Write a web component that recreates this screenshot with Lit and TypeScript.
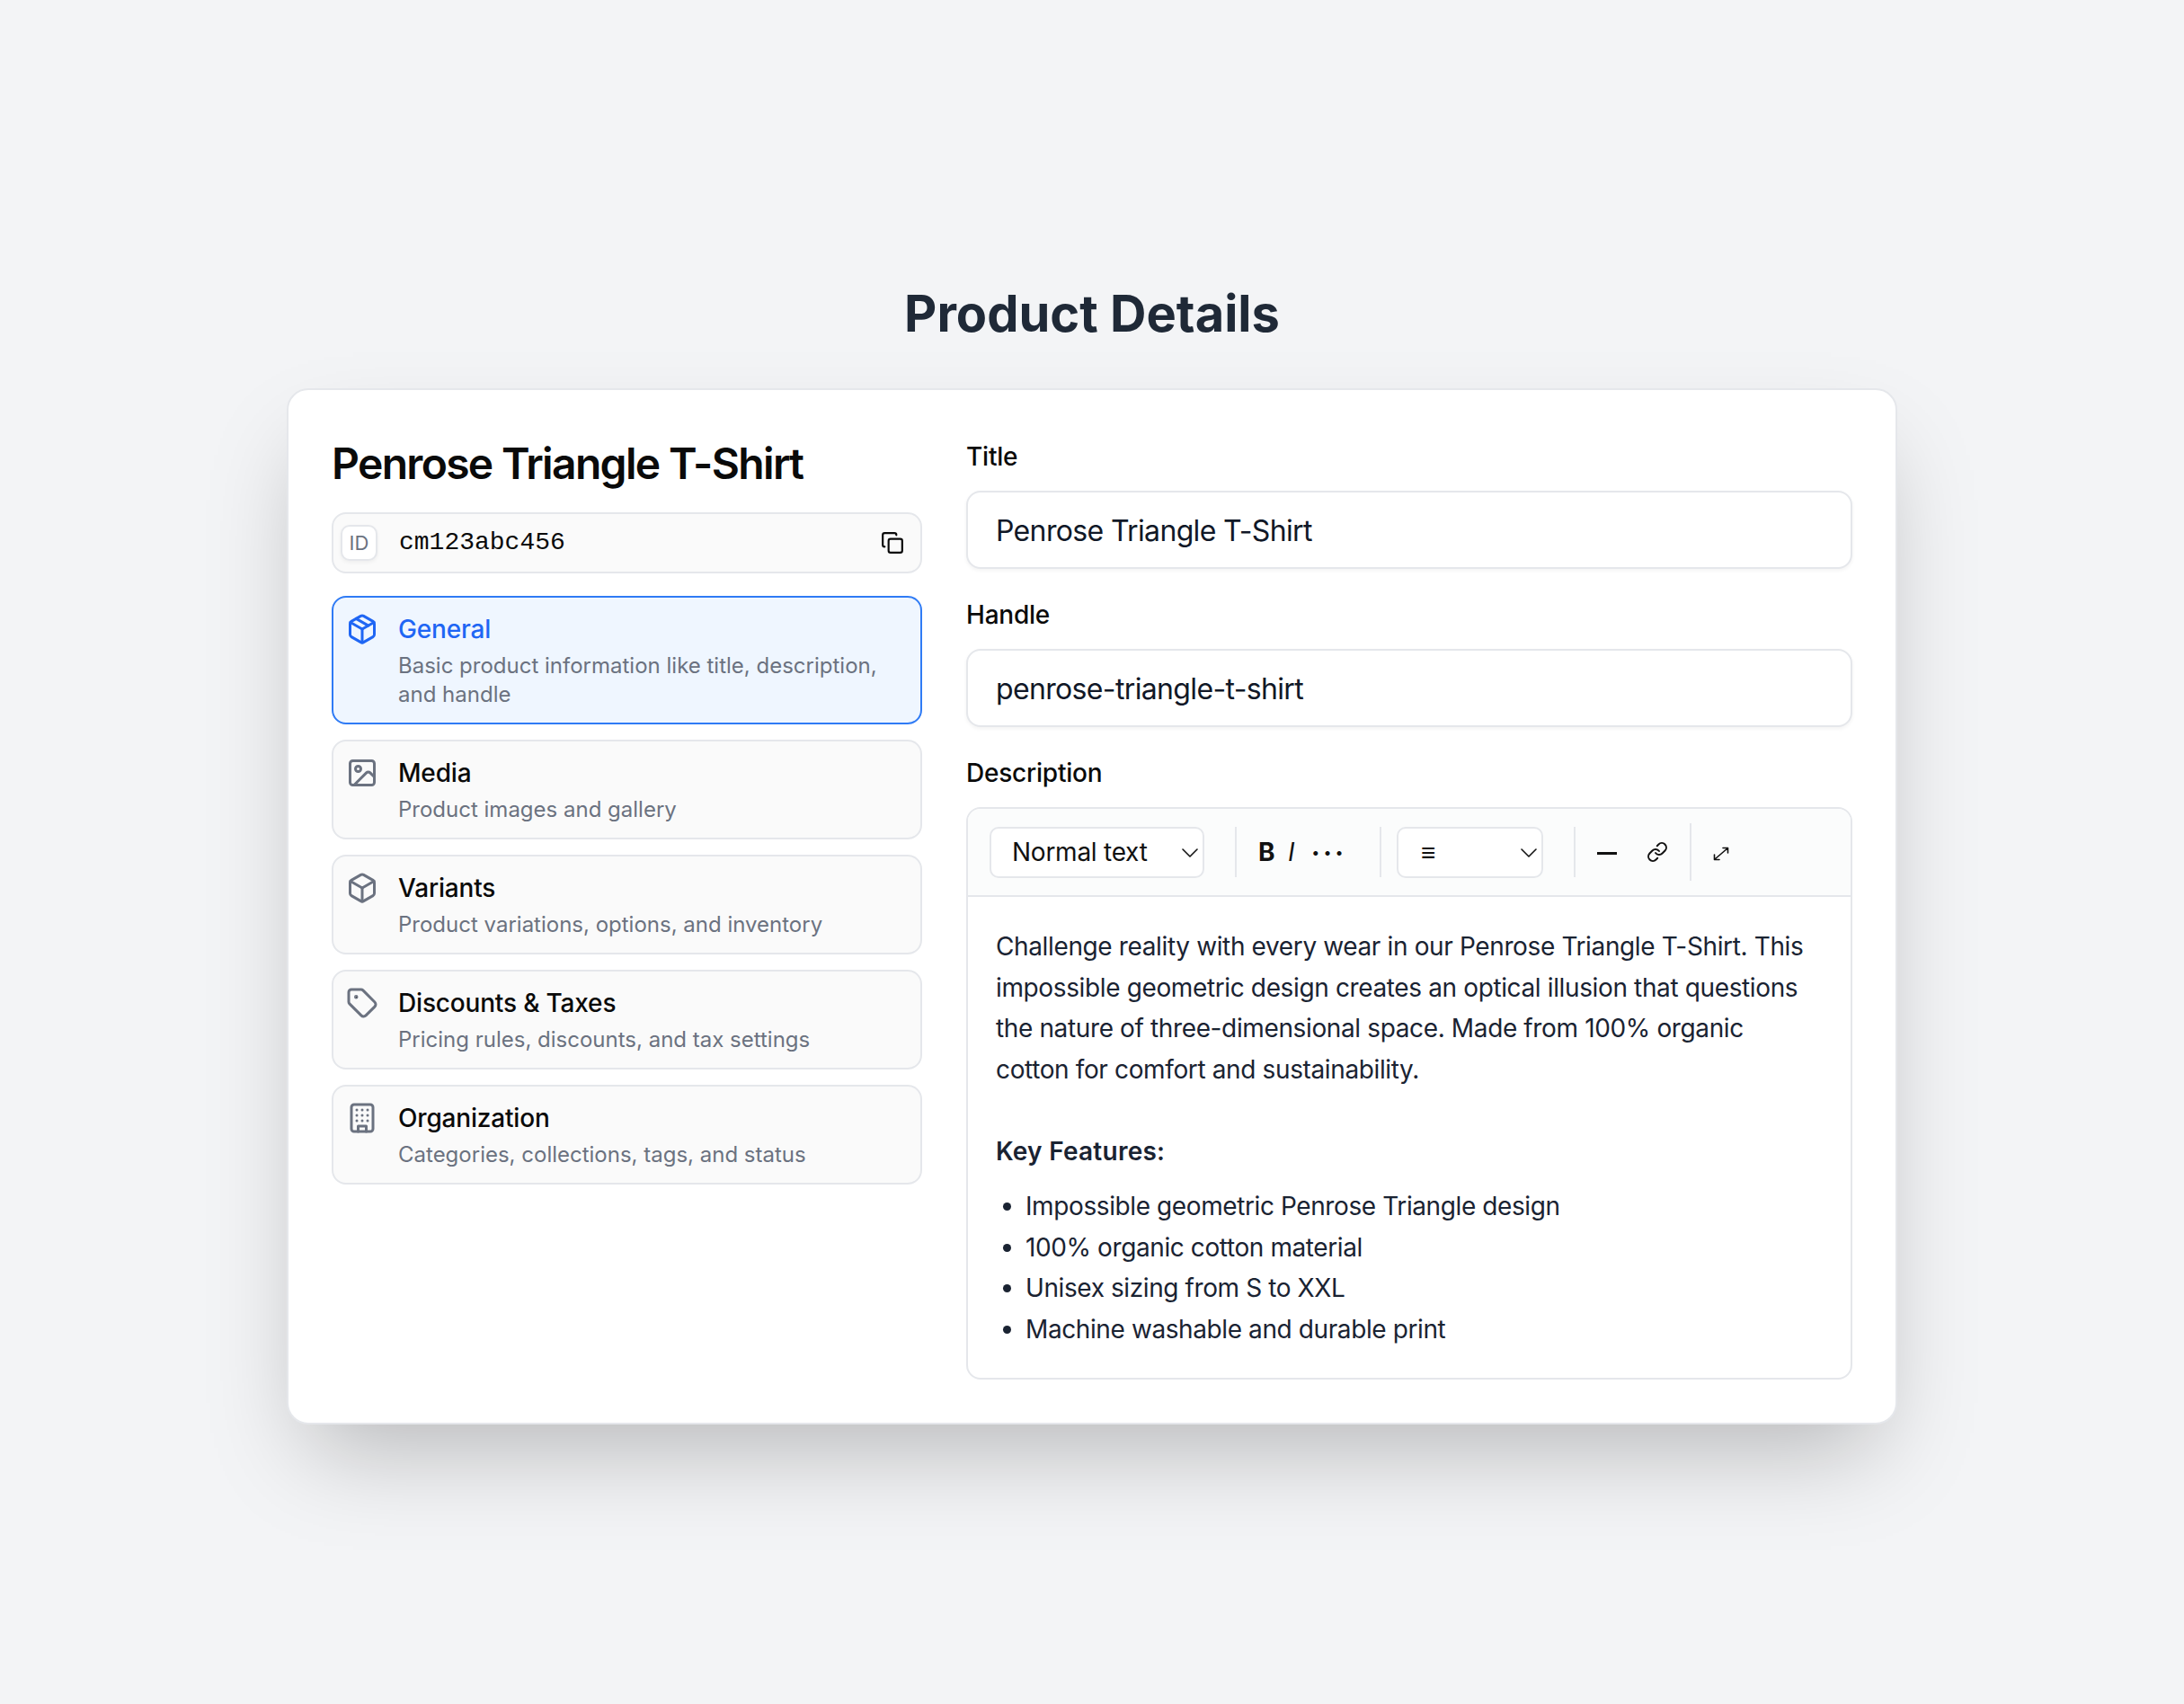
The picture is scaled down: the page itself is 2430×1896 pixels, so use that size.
import { LitElement, css, html, svg } from 'lit';
import { customElement } from 'lit/decorators.js';
import { classMap } from 'lit/directives/class-map.js';

const icons = {
  package: svg`<path d="M11 21.73a2 2 0 0 0 2 0l7-4A2 2 0 0 0 21 16V8a2 2 0 0 0-1-1.73l-7-4a2 2 0 0 0-2 0l-7 4A2 2 0 0 0 3 8v8a2 2 0 0 0 1 1.73z"/><path d="M12 22V12"/><polyline points="3.29 7 12 12 20.71 7"/><path d="m7.5 4.27 9 5.15"/>`,
  image: svg`<rect x="3" y="3" width="18" height="18" rx="2"/><circle cx="9" cy="9" r="2"/><path d="m21 15-3.086-3.086a2 2 0 0 0-2.828 0L6 21"/>`,
  box: svg`<path d="M21 8a2 2 0 0 0-1-1.73l-7-4a2 2 0 0 0-2 0l-7 4A2 2 0 0 0 3 8v8a2 2 0 0 0 1 1.73l7 4a2 2 0 0 0 2 0l7-4A2 2 0 0 0 21 16Z"/><path d="m3.3 7 8.7 5 8.7-5"/><path d="M12 22V12"/>`,
  tag: svg`<path d="M12.586 2.586A2 2 0 0 0 11.172 2H4a2 2 0 0 0-2 2v7.172a2 2 0 0 0 .586 1.414l8.704 8.704a2.426 2.426 0 0 0 3.42 0l6.58-6.58a2.426 2.426 0 0 0 0-3.42z"/><circle cx="7.5" cy="7.5" r=".5" fill="currentColor"/>`,
  building: svg`<rect x="4" y="2" width="16" height="20" rx="2"/><path d="M9 22v-4h6v4"/><path d="M8 6h.01M16 6h.01M12 6h.01M12 10h.01M12 14h.01M16 10h.01M16 14h.01M8 10h.01M8 14h.01"/>`,
};

const chevron = html`<svg class="chevron" viewBox="0 0 18 10"><path d="M1 1l8 8 8-8" /></svg>`;

const sections = [
  { icon: icons.package, name: 'General', desc: 'Basic product information like title, description, and handle', active: true },
  { icon: icons.image, name: 'Media', desc: 'Product images and gallery' },
  { icon: icons.box, name: 'Variants', desc: 'Product variations, options, and inventory' },
  { icon: icons.tag, name: 'Discounts & Taxes', desc: 'Pricing rules, discounts, and tax settings' },
  { icon: icons.building, name: 'Organization', desc: 'Categories, collections, tags, and status' },
];

const features = [
  'Impossible geometric Penrose Triangle design',
  '100% organic cotton material',
  'Unisex sizing from S to XXL',
  'Machine washable and durable print',
];

@customElement('app-root')
export class AppRoot extends LitElement {
  static styles = css`
    :host {
      display: block;
      min-height: 1896px;
      background: #f3f4f6;
      font-family: Inter, 'Liberation Sans', sans-serif;
      color: #0a0a0a;
    }
    * {
      box-sizing: border-box;
    }
    .page {
      min-height: 1896px;
      padding-top: 317px;
      display: flex;
      flex-direction: column;
      align-items: center;
    }
    .page-title {
      margin: 0 0 51px;
      font-size: 56px;
      line-height: 64px;
      font-weight: 700;
      color: #1f2937;
    }
    .card {
      width: 1792px;
      display: grid;
      grid-template-columns: 657px 986px;
      gap: 49px;
      padding: 48px;
      background: #fff;
      border: 2px solid #e5e7eb;
      border-radius: 24px;
      box-shadow: 0 50px 100px -24px rgba(0, 0, 0, 0.25);
    }
    h1 {
      margin: 0 0 22px;
      padding-top: 2px;
      font-size: 48px;
      line-height: 64px;
      font-weight: 600;
      letter-spacing: -1.68px;
    }
    .id-row {
      height: 68px;
      display: flex;
      align-items: center;
      padding: 0 18px 0 8px;
      background: #fafafa;
      border: 2px solid #e5e7eb;
      border-radius: 16px;
      margin-bottom: 25px;
    }
    .id-badge {
      width: 41px;
      height: 40px;
      display: flex;
      align-items: center;
      justify-content: center;
      background: #fff;
      border: 2px solid #e5e7eb;
      border-radius: 10px;
      box-shadow: 0 2px 4px rgba(0, 0, 0, 0.05);
      font-size: 22px;
      color: #6b7280;
    }
    .id-value {
      flex: 1;
      margin-left: 24px;
      font-family: 'Liberation Mono', monospace;
      font-size: 28px;
      line-height: 40px;
    }
    .copy {
      width: 26px;
      height: 26px;
      fill: none;
      stroke: #0a0a0a;
      stroke-width: 2;
      stroke-linecap: round;
      stroke-linejoin: round;
    }
    .sections {
      display: flex;
      flex-direction: column;
      gap: 17px;
    }
    .section {
      display: flex;
      gap: 22px;
      padding: 15px 14px;
      background: #fafafa;
      border: 2px solid #e5e7eb;
      border-radius: 16px;
    }
    .section svg {
      flex: none;
      width: 36px;
      height: 36px;
      margin-top: 2px;
      fill: none;
      stroke: #6b7280;
      stroke-width: 2;
      stroke-linecap: round;
      stroke-linejoin: round;
    }
    .section.active {
      background: #eff6ff;
      border-color: #2f7bf5;
    }
    .section.active svg {
      stroke: #1f66f4;
    }
    .name {
      font-size: 28px;
      line-height: 40px;
      font-weight: 500;
      letter-spacing: -0.18px;
    }
    .section.active .name {
      color: #1f66f4;
    }
    .desc {
      margin-top: 5px;
      font-size: 24px;
      line-height: 32px;
      color: #6b7280;
    }
    .fields {
      padding-top: 6px;
    }
    label {
      display: block;
      margin-bottom: 18px;
      font-size: 28px;
      line-height: 40px;
      font-weight: 500;
      letter-spacing: -0.22px;
    }
    .input {
      height: 87px;
      display: flex;
      align-items: center;
      padding: 1px 31px 0;
      margin-bottom: 31px;
      background: #fff;
      border: 2px solid #e5e7eb;
      border-radius: 16px;
      box-shadow: 0 2px 4px rgba(0, 0, 0, 0.05);
      font-size: 32px;
      letter-spacing: -0.65px;
      color: #111827;
    }
    .editor {
      border: 2px solid #e5e7eb;
      border-radius: 16px;
      overflow: hidden;
    }
    .toolbar {
      height: 98px;
      display: flex;
      align-items: center;
      padding: 0 24px;
      background: #fbfcfc;
      border-bottom: 2px solid #e5e7eb;
    }
    .select {
      position: relative;
      flex: none;
      height: 57px;
    }
    select {
      appearance: none;
      width: 100%;
      height: 100%;
      background: #fff;
      border: 2px solid #e5e7eb;
      border-radius: 10px;
      font: 28px Inter, sans-serif;
      letter-spacing: -0.25px;
      color: #111;
    }
    .chevron {
      position: absolute;
      top: 24px;
      right: 7px;
      width: 18px;
      height: 10px;
      fill: none;
      stroke: #111;
      stroke-width: 1.6;
      stroke-linecap: round;
      stroke-linejoin: round;
    }
    .style-select {
      width: 239px;
    }
    .style-select select {
      padding: 0 0 0 23px;
    }
    .list-select {
      width: 163px;
      margin-left: 17px;
    }
    .list-select select {
      padding: 0 0 0 25px;
    }
    .divider {
      flex: none;
      width: 2px;
      height: 56px;
      background: #e5e7eb;
    }
    .divider.tall {
      height: 64px;
    }
    .after-select {
      margin-left: 34px;
    }
    .tool {
      flex: none;
      font-size: 28px;
      line-height: 40px;
      color: #111;
    }
    .bold {
      width: 18px;
      margin-left: 24px;
      font-weight: 700;
    }
    .italic {
      width: 10px;
      margin-left: 15px;
      font-style: italic;
    }
    .more {
      width: 32px;
      margin-left: 17px;
      margin-right: 43px;
      font-size: 16px;
      letter-spacing: 5.6px;
      font-weight: 700;
      white-space: nowrap;
    }
    .line-tool {
      flex: none;
      margin: 2px 0 0 24px;
      width: 22px;
      height: 3px;
      background: #111;
    }
    .tool-icon {
      flex: none;
      fill: none;
      stroke: #111;
      stroke-linecap: round;
      stroke-linejoin: round;
    }
    .link-icon {
      width: 24px;
      height: 24px;
      margin-left: 33px;
      margin-right: 24px;
      stroke-width: 2;
    }
    .expand-icon {
      width: 20px;
      height: 20px;
      margin-left: 23px;
      stroke-width: 1.6;
    }
    .body {
      padding: 33px 40px 31px 31px;
      font-size: 28px;
      line-height: 45.5px;
      letter-spacing: -0.37px;
      color: #1a2332;
    }
    .body p {
      margin: 0;
    }
    .body strong {
      display: block;
      margin-top: 45.5px;
      font-weight: 600;
      letter-spacing: 0.25px;
    }
    .body ul {
      margin: 16px 0 0;
      padding: 0 0 0 33px;
      letter-spacing: -0.4px;
    }
  `;

  render() {
    return html`
      <div class="page">
        <h2 class="page-title">Product Details</h2>
        <div class="card">
          <div>
            <h1>Penrose Triangle T-Shirt</h1>
            <div class="id-row">
              <span class="id-badge">ID</span>
              <span class="id-value">cm123abc456</span>
              <svg class="copy" viewBox="0 0 24 24">
                <rect x="8" y="8" width="14" height="14" rx="2" />
                <path d="M4 16c-1.1 0-2-.9-2-2V4c0-1.1.9-2 2-2h10c1.1 0 2 .9 2 2" />
              </svg>
            </div>
            <div class="sections">
              ${sections.map(
                (s) => html`
                  <div class=${classMap({ section: true, active: !!s.active })}>
                    <svg viewBox="0 0 24 24">${s.icon}</svg>
                    <div>
                      <div class="name">${s.name}</div>
                      <div class="desc">${s.desc}</div>
                    </div>
                  </div>
                `,
              )}
            </div>
          </div>
          <div class="fields">
            <label>Title</label>
            <div class="input">Penrose Triangle T-Shirt</div>
            <label>Handle</label>
            <div class="input">penrose-triangle-t-shirt</div>
            <label>Description</label>
            <div class="editor">
              <div class="toolbar">
                <div class="select style-select">
                  <select><option>Normal text</option></select>
                  ${chevron}
                </div>
                <span class="divider after-select"></span>
                <span class="tool bold">B</span>
                <span class="tool italic">I</span>
                <span class="tool more">•••</span>
                <span class="divider"></span>
                <div class="select list-select">
                  <select><option>≡</option></select>
                  ${chevron}
                </div>
                <span class="divider after-select"></span>
                <span class="line-tool"></span>
                <svg class="tool-icon link-icon" viewBox="0 0 24 24">
                  <path d="M10 13a5 5 0 0 0 7.54.54l3-3a5 5 0 0 0-7.07-7.07l-1.72 1.71" />
                  <path d="M14 11a5 5 0 0 0-7.54-.54l-3 3a5 5 0 0 0 7.07 7.07l1.71-1.71" />
                </svg>
                <span class="divider tall"></span>
                <svg class="tool-icon expand-icon" viewBox="0 0 20 20">
                  <path d="M3 18 17 6M12 5.5h5.5V11M2.5 13v5.5H8" />
                </svg>
              </div>
              <div class="body">
                <p>
                  Challenge reality with every wear in our Penrose Triangle T-Shirt. This impossible
                  geometric design creates an optical illusion that questions the nature of
                  three-dimensional space. Made from 100% organic cotton for comfort and
                  sustainability.
                </p>
                <strong>Key Features:</strong>
                <ul>
                  ${features.map((f) => html`<li>${f}</li>`)}
                </ul>
              </div>
            </div>
          </div>
        </div>
      </div>
    `;
  }
}
